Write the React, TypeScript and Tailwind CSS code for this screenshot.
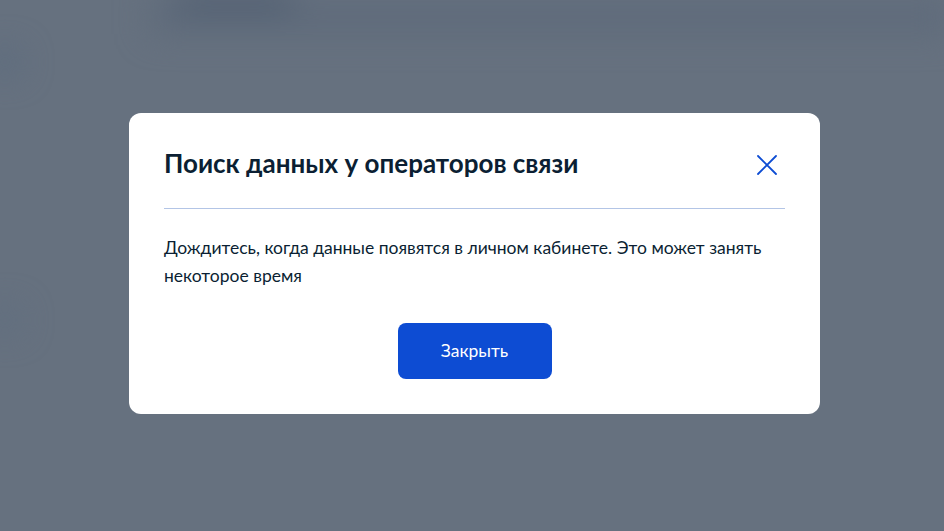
import React from 'react';

const CloseIcon: React.FC = () => (
  <svg width="22" height="22" viewBox="0 0 22 22" fill="none">
    <path d="M2 2L20 20M20 2L2 20" stroke="#0d4cd3" strokeWidth="1.8" strokeLinecap="round" />
  </svg>
);

export default function App() {
  return (
    <div className="relative w-full h-[531px] overflow-hidden bg-[#66717f]" style={{ fontFamily: 'Lato, "Noto Sans", sans-serif' }}>
      {/* blurred page behind the overlay */}
      <div className="absolute inset-0 blur-lg pointer-events-none">
        <div className="absolute left-[150px] top-0 w-[800px] h-[34px] bg-[#5f6b7b]" />
        <div className="absolute left-[175px] top-[-6px] w-[120px] h-[18px] rounded-full bg-[#4f5d70]" />
        <div className="absolute left-[-10px] top-[50px] w-[30px] h-[24px] rounded-full bg-[#5a6a7e]" />
        <div className="absolute left-[-10px] top-[308px] w-[30px] h-[24px] rounded-full bg-[#5f6e80]" />
      </div>

      <div className="relative flex items-center justify-center h-full pl-[5px] pb-[4px]">
        <div className="w-[691px] h-[301px] bg-white rounded-[12px] px-[35px] pt-[34px] pb-[35px] flex flex-col">
          <div className="flex items-start justify-between">
            <h2 className="text-[26px] leading-[32px] font-bold text-[#0b1f33]">Поиск данных у операторов связи</h2>
            <button className="mt-[7px] mr-[7px]">
              <CloseIcon />
            </button>
          </div>
          <div className="mt-[29px] h-px bg-[#b3c5e6]" />
          <p className="mt-[25px] text-[17.5px] leading-[28px] text-[#0b1f33]">
            Дождитесь, когда данные появятся в личном кабинете. Это может занять некоторое время
          </p>
          <div className="mt-auto flex justify-center">
            <button className="w-[154px] h-[56px] rounded-[8px] bg-[#0d4cd3] text-white text-[17.5px]">Закрыть</button>
          </div>
        </div>
      </div>
    </div>
  );
}
